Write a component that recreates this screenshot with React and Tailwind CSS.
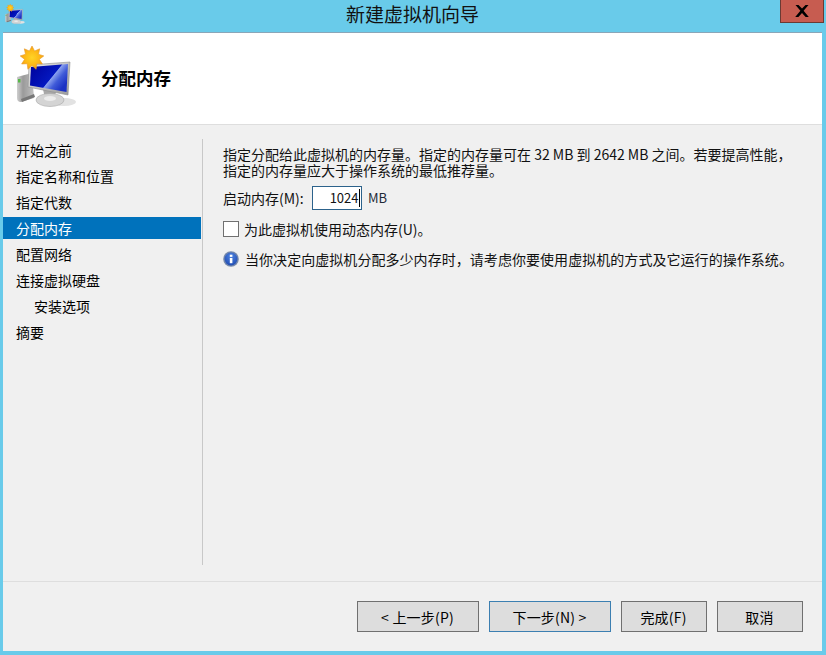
const font = { fontFamily: '"Noto Sans CJK SC", "Liberation Sans", sans-serif' };

const star = (() => {
  const pts = [];
  for (let i = 0; i < 18; i++) {
    const r = i % 2 === 0 ? 12 : 7.5;
    const a = (Math.PI * i) / 9 - Math.PI / 2;
    pts.push(`${(22 + r * Math.cos(a)).toFixed(1)},${(18 + r * Math.sin(a)).toFixed(1)}`);
  }
  return pts.join(" ");
})();

function Monitor({ size }) {
  const k = `g${size}`;
  return (
    <svg width={size} height={size} viewBox="0 0 70 70" className="block">
      <defs>
        <linearGradient id={`${k}s`} x1="0" y1="0" x2="1" y2="0.6">
          <stop offset="0" stopColor="#00009a" />
          <stop offset="0.62" stopColor="#0418c0" />
          <stop offset="0.64" stopColor="#8aa0ee" />
          <stop offset="0.8" stopColor="#3f5ad8" />
          <stop offset="1" stopColor="#1c32c4" />
        </linearGradient>
        <linearGradient id={`${k}c`} x1="0" y1="0" x2="1" y2="1">
          <stop offset="0" stopColor="#ececec" />
          <stop offset="1" stopColor="#9a9a9a" />
        </linearGradient>
        <linearGradient id={`${k}t`} x1="0" y1="0" x2="1" y2="0">
          <stop offset="0" stopColor="#cfcfcf" />
          <stop offset="0.35" stopColor="#9a9a9a" />
          <stop offset="1" stopColor="#c0c0c0" />
        </linearGradient>
        <radialGradient id={`${k}b`} cx="0.5" cy="0.5" r="0.5">
          <stop offset="0" stopColor="#ffd426" />
          <stop offset="0.7" stopColor="#fdb515" />
          <stop offset="1" stopColor="#f29a10" />
        </radialGradient>
      </defs>
      <ellipse cx="54" cy="62" rx="12" ry="4" fill="#e2e2e2" />
      <path d="M7 37 L22 33 L24 58 L11 62 Q7 62 7 58 Z" fill={`url(#${k}t)`} />
      <rect x="8" y="39" width="2.5" height="3.5" fill="#58b848" />
      <path d="M11 59 L24 54 L25 57 L12 62 Z" fill="#777" />
      <path d="M33 49 L46 50 L45 59 L35 59 Z" fill="#a8a8a8" />
      <ellipse cx="40" cy="60" rx="14" ry="6.5" fill="#d4d4d4" stroke="#a8a8a8" strokeWidth="0.6" />
      <ellipse cx="40" cy="58.5" rx="6" ry="2.5" fill="#ececec" />
      <path d="M19 25 L60 22 L58 55 L18 47 Z" fill={`url(#${k}c)`} stroke="#8f8f8f" strokeWidth="0.6" />
      <path d="M21 27 L58 24 L56.5 52 L20 45.5 Z" fill={`url(#${k}s)`} />
      <polygon points={star} fill={`url(#${k}b)`} stroke="#e79a2a" strokeWidth="0.6" />
    </svg>
  );
}

const steps = [
  ["开始之前"],
  ["指定名称和位置"],
  ["指定代数"],
  ["分配内存", "selected"],
  ["配置网络"],
  ["连接虚拟硬盘"],
  ["安装选项", "sub"],
  ["摘要"],
];

function Btn({ children, w, focus }) {
  return (
    <div className={`flex h-[31px] items-center justify-center border bg-[#dddddd] pr-px pt-px text-[14px] tracking-[0.2px] text-black ${w} ${focus ? "border-[#3c7fb1]" : "border-[#707070]"}`}>
      {children}
    </div>
  );
}

export default function App() {
  return (
    <div style={font} className="flex h-[655px] w-[826px] flex-col overflow-hidden bg-[#69cbea] pb-1 pl-[3px] pr-1 text-black">
      <div className="relative -mr-1 flex h-8 items-start justify-center">
        <div className="absolute left-0 top-[2px]"><Monitor size={23} /></div>
        <div className="pr-[4px] pt-[1px] text-center text-[19px] leading-[26px] text-[#111]">新建虚拟机向导</div>
        <div className="absolute right-[2px] top-0 flex h-[23px] w-[44px] items-center justify-center border border-t-0 border-[#6b3a33] bg-[#c75c50]">
          <svg width="14" height="12" viewBox="0 0 14 12"><path d="M0.5 0 L3.5 0 L7 3.6 L10.5 0 L13.5 0 L8.6 5.8 L13.8 12 L10.6 12 L7 8 L3.4 12 L0.2 12 L5.4 5.8 Z" fill="#000" /></svg>
        </div>
      </div>
      <div className="flex h-[92px] items-start border-t border-[#8aa6b8] bg-white">
        <div className="ml-[7px] mt-[7px] w-[70px]"><Monitor size={70} /></div>
        <div className="ml-[21px] mt-[33px] text-[17.5px] font-bold leading-[24px]">分配内存</div>
      </div>
      <div className="flex min-h-0 flex-1 flex-col bg-[#f0f0f0]">
        <div className="flex h-[457px] border-t border-[#dedede] pt-[14px]">
          <div className="flex w-[198px] flex-col gap-1 text-[14px] leading-[22px]">
            {steps.map(([t, k]) => (
              <div key={t} className={`h-[22px] ${k === "sub" ? "pl-[31px]" : "pl-[13px]"} ${k === "selected" ? "bg-[#0072bc] text-white" : ""}`}>{t}</div>
            ))}
          </div>
          <div className="ml-px h-[426px] w-px bg-[#c8c8c8]" />
          <div className="flex flex-col pl-5 pt-[7px] text-[#111]">
            <p className="w-[585px] text-[14px] leading-[16px]">指定分配给此虚拟机的内存量。指定的内存量可在 32 MB 到 2642 MB 之间。若要提高性能，<br />指定的内存量应大于操作系统的最低推荐量。</p>
            <div className="mt-2 flex h-[24px] items-center">
              <span className="w-[89px] text-[14px]">启动内存(M):</span>
              <div className="flex h-[24px] w-[50px] items-center justify-end border border-[#2c628b] bg-white pr-[1px] text-[13px]">
                <span>1024</span><span className="ml-[0.5px] h-[18px] w-px bg-black" />
              </div>
              <span className="ml-[6px] text-[13px] text-[#1e2a38]">MB</span>
            </div>
            <div className="mt-[11px] flex h-[16px] items-center">
              <div className="h-[16px] w-[16px] border border-[#707070] bg-white" />
              <span className="ml-[5px] text-[14px]">为此虚拟机使用动态内存(U)。</span>
            </div>
            <div className="mt-[14px] flex h-[16px] items-center">
              <svg width="16" height="16" viewBox="0 0 16 16">
                <defs>
                  <radialGradient id="info" cx="0.5" cy="0.3" r="0.8">
                    <stop offset="0" stopColor="#4f84e0" />
                    <stop offset="1" stopColor="#1a45ad" />
                  </radialGradient>
                </defs>
                <circle cx="8" cy="8" r="7.8" fill="#7488ab" />
                <circle cx="8" cy="8" r="6.4" fill="url(#info)" />
                <rect x="6.8" y="7" width="2.6" height="5.2" fill="#fff" />
                <rect x="6.8" y="3.7" width="2.6" height="2.2" fill="#fff" />
              </svg>
              <span className="ml-[6px] whitespace-nowrap text-[14px] tracking-[0.05px]">当你决定向虚拟机分配多少内存时，请考虑你要使用虚拟机的方式及它运行的操作系统。</span>
            </div>
          </div>
        </div>
        <div className="h-px bg-[#dedede]" />
        <div className="flex gap-[10px] pl-[354px] pt-[19px]">
          <Btn w="w-[122px]">&lt; 上一步(P)</Btn>
          <Btn w="w-[122px]" focus>下一步(N) &gt;</Btn>
          <Btn w="w-[86px]">完成(F)</Btn>
          <Btn w="w-[86px]">取消</Btn>
        </div>
      </div>
    </div>
  );
}
